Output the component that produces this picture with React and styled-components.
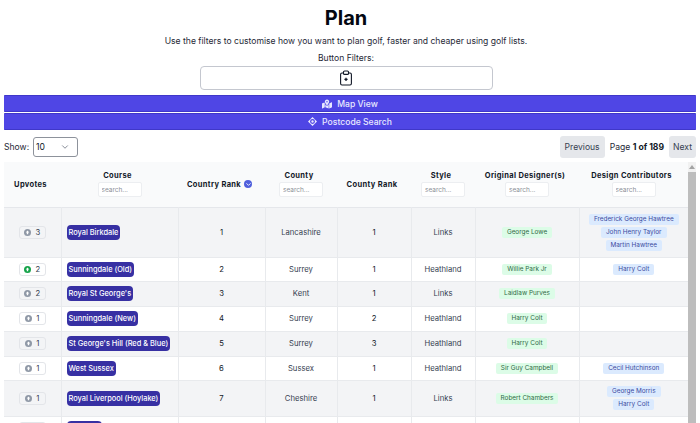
import React from "react";
import styled, { createGlobalStyle } from "styled-components";
import { ChevronDown } from "lucide-react";
import { FaMapMarkedAlt } from "react-icons/fa";

const GlobalStyle = createGlobalStyle`
  html, body {
    margin: 0;
    padding: 0;
    background: #fff;
    overflow: hidden;
  }
  body {
    font-family: "Inter", "Liberation Sans", sans-serif;
    color: #111827;
  }
`;

const Page = styled.div`
  height: 423px;
  padding: 0 4px;
  box-sizing: border-box;
  display: flex;
  flex-direction: column;
  overflow: hidden;
`;

const Intro = styled.div`
  padding-right: 8px;
`;

const Title = styled.h1`
  margin: 6px 0 0;
  font-size: 20px;
  line-height: 24px;
  font-weight: 700;
  text-align: center;
  color: #030712;
`;

const Lead = styled.p`
  margin: 4px 0 0;
  font-size: 8.6px;
  line-height: 14px;
  text-align: center;
  color: #1f2937;
`;

const FilterLabel = styled.div`
  margin-top: 4px;
  font-size: 8.6px;
  line-height: 13px;
  text-align: center;
  color: #1f2937;
`;

const FilterBox = styled.div`
  width: 293px;
  height: 24px;
  margin: 1px auto 0 auto;
  box-sizing: border-box;
  border: 1px solid #c4c7cf;
  border-radius: 4px;
  display: flex;
  align-items: center;
  justify-content: center;
  color: #111827;
`;

const WideButton = styled.div`
  height: 17px;
  margin-top: ${(props) => props.$gap}px;
  box-sizing: border-box;
  background: #4f46e5;
  border-top: 1px solid #3f37c9;
  border-bottom: 1px solid #3f37c9;
  color: #e8e8ff;
  font-size: 8.6px;
  font-weight: 500;
  display: flex;
  align-items: center;
  justify-content: center;
  gap: 5px;
  border-radius: 1px;
`;

const PagerRow = styled.div`
  display: flex;
  align-items: center;
  justify-content: space-between;
  height: 22px;
  margin-top: 6px;
`;

const ShowGroup = styled.div`
  display: flex;
  align-items: center;
  gap: 4px;
  font-size: 8.6px;
  color: #1f2937;
`;

const ShowSelect = styled.div`
  width: 45px;
  height: 20px;
  box-sizing: border-box;
  border: 1px solid #8d929b;
  border-radius: 3px;
  padding: 0 7px 0 2px;
  display: flex;
  align-items: center;
  justify-content: space-between;
  font-size: 8.6px;
  color: #111827;
`;

const Pager = styled.div`
  display: flex;
  align-items: center;
`;

const PagerButton = styled.div`
  height: 22px;
  padding: 0 ${(props) => props.$pad}px;
  background: #e5e7eb;
  border-radius: 3px;
  color: #374151;
  font-size: 8.6px;
  display: flex;
  align-items: center;
`;

const PageText = styled.div`
  margin: 0 5px;
  font-size: 8.6px;
  color: #1f2937;
  strong {
    font-weight: 700;
    color: #111827;
  }
`;

const TableArea = styled.div`
  flex: 1;
  min-height: 0;
  margin-top: 4px;
  display: flex;
`;

const TableScroll = styled.div`
  flex: 1;
  min-width: 0;
  overflow: hidden;
`;

const ScrollRail = styled.div`
  width: 8px;
  background: #f1f1f1;
  display: flex;
  flex-direction: column;
  align-items: center;
`;

const ScrollArrow = styled.div`
  height: 10px;
  color: #a3a3a3;
  display: flex;
  align-items: center;
`;

const ScrollThumb = styled.div`
  align-self: stretch;
  flex: 1;
  background: #bdbdbd;
`;

const Table = styled.table`
  width: 684px;
  table-layout: fixed;
  border-collapse: collapse;
  font-size: 7.7px;
`;

const HeadRow = styled.tr`
  height: 45px;
  background: #f9fafb;
  border-bottom: 1px solid #e5e7eb;
`;

const Th = styled.th`
  padding: 0;
  font-size: 7.5px;
  font-weight: 700;
  letter-spacing: 0.35px;
  color: #111827;
  text-align: center;
  vertical-align: middle;
`;

const HeadLabel = styled.span`
  padding-right: 4px;
`;

const HeadInner = styled.div`
  display: flex;
  flex-direction: column;
  align-items: center;
  gap: 2px;
`;

const SearchBox = styled.input`
  width: 44px;
  height: 15px;
  box-sizing: border-box;
  padding: 0 3px;
  border: 1px solid #eceef1;
  border-radius: 2px;
  background: #fff;
  font-family: inherit;
  font-size: 6.5px;
  &::placeholder {
    color: #8b8f97;
    opacity: 1;
  }
`;

const SortDot = styled.span`
  display: inline-flex;
  align-items: center;
  justify-content: center;
  width: 8px;
  height: 8px;
  margin-left: 3px;
  border-radius: 50%;
  background: #4f5fdc;
  color: #fff;
  vertical-align: -1px;
`;

const Row = styled.tr`
  height: ${(props) => props.$height}px;
  background: ${(props) => (props.$alt ? "#f3f4f6" : "#fff")};
  border-bottom: 1px solid #e8eaed;
`;

const Td = styled.td`
  padding: 0;
  text-align: ${(props) => (props.$left ? "left" : "center")};
  padding-left: ${(props) => (props.$left ? "5px" : "0")};
  border-left: ${(props) => (props.$first ? "none" : "1px solid #e8eaed")};
  color: ${(props) => (props.$dark ? "#111827" : "#374151")};
  vertical-align: middle;
`;

const VoteButton = styled.div`
  display: inline-flex;
  align-items: center;
  justify-content: center;
  gap: 4px;
  width: 27px;
  height: 13px;
  box-sizing: border-box;
  border: 1px solid #e3e5e9;
  border-radius: 3px;
  background: ${(props) => (props.$alt ? "#f3f4f6" : "#fff")};
  font-size: 7.7px;
  color: #374151;
`;

const CourseBadge = styled.span`
  display: inline-block;
  padding: 0 2px;
  height: 15px;
  line-height: 15px;
  border-radius: 4px;
  background: #3730a3;
  color: #fff;
  font-size: 7.4px;
  font-weight: 500;
  white-space: nowrap;
  vertical-align: middle;
`;

const TagStack = styled.div`
  display: flex;
  flex-direction: column;
  align-items: center;
  gap: 2px;
`;

const Tag = styled.span`
  display: inline-block;
  height: 11px;
  line-height: 11px;
  padding: 0 5px;
  border-radius: 2px;
  font-size: 6.4px;
  white-space: nowrap;
  background: ${(props) => (props.$blue ? "#dbeafe" : "#dcfce7")};
  color: ${(props) => (props.$blue ? "#3b4a9e" : "#2f6b46")};
`;

const VoteIcon = ({ active }) => (
  <svg width="7" height="7" viewBox="0 0 20 20">
    <circle cx="10" cy="10" r="10" fill={active ? "#16a34a" : "#8f98a6"} />
    <path d="M10 4.5 L15 10 H12 V15 H8 V10 H5 Z" fill="#fff" />
  </svg>
);

const DiamondIcon = () => (
  <svg width="9" height="9" viewBox="0 0 20 20">
    <path
      fillRule="evenodd"
      d="M10 0 L20 10 L10 20 L0 10 Z M10 4.5 A5.5 5.5 0 1 0 10 15.5 A5.5 5.5 0 1 0 10 4.5 Z"
      fill="#e8e8ff"
    />
    <circle cx="10" cy="10" r="2.6" fill="#e8e8ff" />
  </svg>
);

const ClipboardIcon = () => (
  <svg width="12" height="16" viewBox="0 0 12 16" fill="none" stroke="currentColor">
    <path d="M3.5 3 H2 A1.5 1.5 0 0 0 0.6 4.5 V13.5 A1.5 1.5 0 0 0 2 15 H10 A1.5 1.5 0 0 0 11.4 13.5 V4.5 A1.5 1.5 0 0 0 10 3 H8.5" strokeWidth="1.1" />
    <rect x="3.5" y="1" width="5" height="3.4" rx="1" strokeWidth="1.1" />
    <path d="M6 7.8 V11 M4.4 9.4 H7.6" strokeWidth="1.3" />
  </svg>
);

const courses = [
  { votes: 3, name: "Royal Birkdale", rank: 1, county: "Lancashire", cr: 1, style: "Links", orig: ["George Lowe"], contrib: ["Frederick George Hawtree", "John Henry Taylor", "Martin Hawtree"], h: 50 },
  { votes: 2, active: true, name: "Sunningdale (Old)", rank: 2, county: "Surrey", cr: 1, style: "Heathland", orig: ["Willie Park Jr"], contrib: ["Harry Colt"], h: 24 },
  { votes: 2, name: "Royal St George's", rank: 3, county: "Kent", cr: 1, style: "Links", orig: ["Laidlaw Purves"], contrib: [], h: 25 },
  { votes: 1, name: "Sunningdale (New)", rank: 4, county: "Surrey", cr: 2, style: "Heathland", orig: ["Harry Colt"], contrib: [], h: 25 },
  { votes: 1, name: "St George's Hill (Red & Blue)", rank: 5, county: "Surrey", cr: 3, style: "Heathland", orig: ["Harry Colt"], contrib: [], h: 25 },
  { votes: 1, name: "West Sussex", rank: 6, county: "Sussex", cr: 1, style: "Heathland", orig: ["Sir Guy Campbell"], contrib: ["Cecil Hutchinson"], h: 24 },
  { votes: 1, name: "Royal Liverpool (Hoylake)", rank: 7, county: "Cheshire", cr: 1, style: "Links", orig: ["Robert Chambers"], contrib: ["George Morris", "Harry Colt"], h: 36 },
  { votes: 1, name: "Muirfield", rank: 8, county: "Lothian", cr: 1, style: "Links", orig: ["Old Tom Morris"], contrib: [], h: 25 },
];

const widths = [57, 117, 87, 72, 74, 64, 104, 109];

const Column = ({ label }) => (
  <Th>
    <HeadInner>
      <HeadLabel>{label}</HeadLabel>
      <SearchBox placeholder="search..." readOnly />
    </HeadInner>
  </Th>
);

const App = () => (
  <Page>
    <GlobalStyle />
    <Intro>
      <Title>Plan</Title>
      <Lead>Use the filters to customise how you want to plan golf, faster and cheaper using golf lists.</Lead>
      <FilterLabel>Button Filters:</FilterLabel>
      <FilterBox>
        <ClipboardIcon />
      </FilterBox>
    </Intro>
    <WideButton $gap={5}>
      <FaMapMarkedAlt size={10} />
      Map View
    </WideButton>
    <WideButton $gap={1}>
      <DiamondIcon />
      Postcode Search
    </WideButton>
    <PagerRow>
      <ShowGroup>
        Show:
        <ShowSelect>
          10
          <ChevronDown size={10} strokeWidth={1.6} color="#4b5563" />
        </ShowSelect>
      </ShowGroup>
      <Pager>
        <PagerButton $pad={5}>Previous</PagerButton>
        <PageText>Page <strong>1 of 189</strong></PageText>
        <PagerButton $pad={4}>Next</PagerButton>
      </Pager>
    </PagerRow>
    <TableArea>
      <TableScroll>
        <Table>
          <colgroup>
            {widths.map((w, i) => (
              <col key={i} style={{ width: w }} />
            ))}
          </colgroup>
          <thead>
            <HeadRow>
              <Th><HeadLabel>Upvotes</HeadLabel></Th>
              <Column label="Course" />
              <Th>
                <HeadLabel>
                  Country Rank
                  <SortDot>
                    <ChevronDown size={7} strokeWidth={3} />
                  </SortDot>
                </HeadLabel>
              </Th>
              <Column label="County" />
              <Th><HeadLabel>County Rank</HeadLabel></Th>
              <Column label="Style" />
              <Column label="Original Designer(s)" />
              <Column label="Design Contributors" />
            </HeadRow>
          </thead>
          <tbody>
            {courses.map((c, i) => (
              <Row key={c.name} $height={c.h} $alt={i % 2 === 0}>
                <Td $first>
                  <VoteButton $alt={i % 2 === 0}>
                    <VoteIcon active={c.active} />
                    {c.votes}
                  </VoteButton>
                </Td>
                <Td $left>
                  <CourseBadge>{c.name}</CourseBadge>
                </Td>
                <Td $dark>{c.rank}</Td>
                <Td>{c.county}</Td>
                <Td $dark>{c.cr}</Td>
                <Td>{c.style}</Td>
                <Td>
                  <TagStack>
                    {c.orig.map((n) => (
                      <Tag key={n}>{n}</Tag>
                    ))}
                  </TagStack>
                </Td>
                <Td>
                  <TagStack>
                    {c.contrib.map((n) => (
                      <Tag key={n} $blue>{n}</Tag>
                    ))}
                  </TagStack>
                </Td>
              </Row>
            ))}
          </tbody>
        </Table>
      </TableScroll>
      <ScrollRail>
        <ScrollArrow>
          <svg width="6" height="4" viewBox="0 0 6 4">
            <path d="M3 0 L6 4 H0 Z" fill="currentColor" />
          </svg>
        </ScrollArrow>
        <ScrollThumb />
      </ScrollRail>
    </TableArea>
  </Page>
);

export default App;
